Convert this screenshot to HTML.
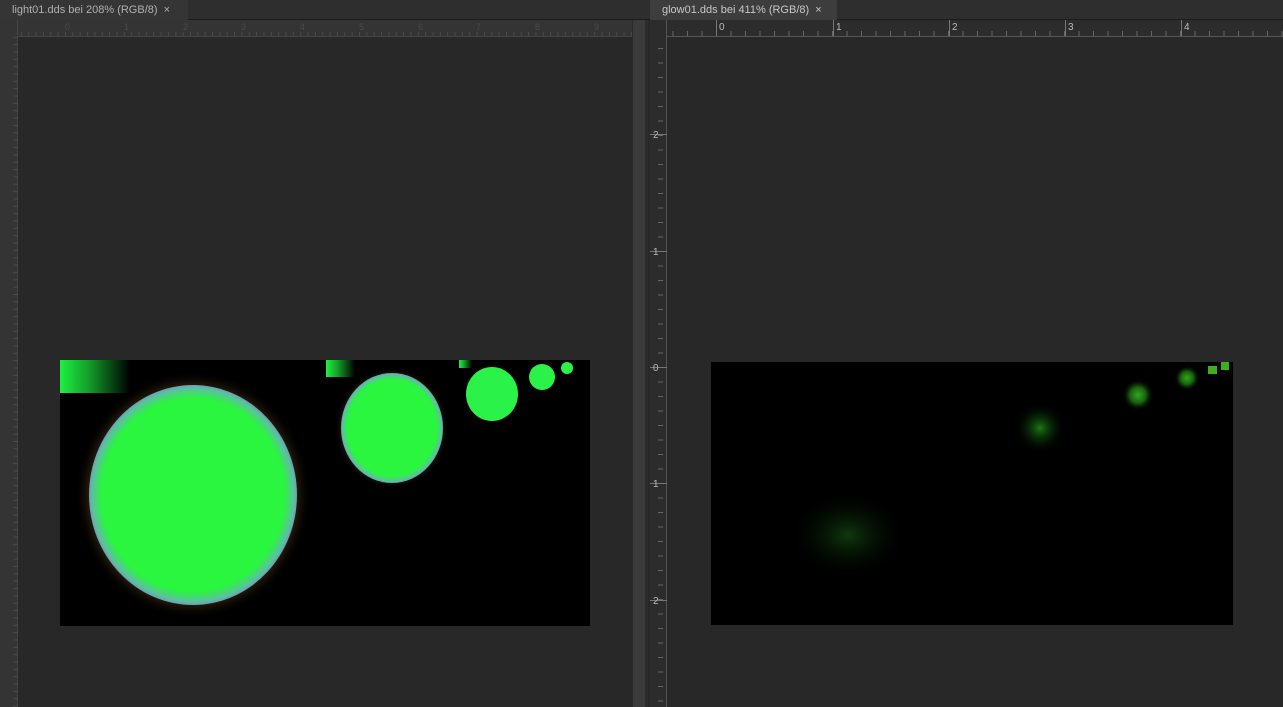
<!DOCTYPE html><html><head><style>
body{margin:0;width:1283px;height:707px;background:#282828;position:relative;overflow:hidden;font-family:"Liberation Sans",sans-serif}
div{position:absolute;box-sizing:border-box}
.tab{top:0;height:20px;background:#3d3d3d;color:#c8c8c8;font-size:11px;line-height:20px;padding-left:12px}
</style></head><body>
<div style="left:0;top:0;width:1283px;height:20px;background:#2e2e2e;border-bottom:1px solid #1c1c1c"></div>
<div class="tab" style="left:0;width:188px;background:#353535;color:#b0b0b0">light01.dds bei 208% (RGB/8) &nbsp;×</div>
<div class="tab" style="left:650px;width:187px">glow01.dds bei 411% (RGB/8) &nbsp;×</div>
<div style="left:0;top:20px;width:632px;height:17px;background:#343434;border-bottom:1px solid #444"></div>
<div style="left:0;top:20px;width:18px;height:687px;background:#343434;border-right:1px solid #444"></div>
<div style="left:18px;top:37px;width:614px;height:670px;background:#282828"></div>
<div style="left:632px;top:20px;width:16px;height:687px;background:#3b3b3b;border-left:1px solid #2a2a2a;border-right:3px solid #2c2c2c"></div>
<div style="left:650px;top:20px;width:633px;height:17px;background:#2c2c2c;border-bottom:1px solid #555"></div>
<div style="left:650px;top:20px;width:17px;height:687px;background:#2c2c2c;border-right:1px solid #555"></div>
<svg style="position:absolute;left:0;top:0" width="1283" height="707">
<defs>
<pattern id="th" x="716" y="0" width="14.5" height="37" patternUnits="userSpaceOnUse"><path d="M0.5 31V36" stroke="#666"/></pattern>
<pattern id="tv" x="0" y="367" width="17" height="14.5" patternUnits="userSpaceOnUse"><path d="M12 0.5H17" stroke="#666"/></pattern>
<pattern id="thl" x="65" y="0" width="7.35" height="37" patternUnits="userSpaceOnUse"><path d="M0.5 32V36" stroke="#4a4a4a"/></pattern>
<pattern id="tvl" x="0" y="0" width="18" height="7.35" patternUnits="userSpaceOnUse"><path d="M13 0.5H18" stroke="#4a4a4a"/></pattern>
<radialGradient id="big"><stop offset="0.88" stop-color="#2af53f"/><stop offset="0.97" stop-color="#5cc0a0"/><stop offset="1" stop-color="#6aa0b8"/></radialGradient>
<radialGradient id="halo"><stop offset="0.85" stop-color="#3a2a10"/><stop offset="1" stop-color="#000" stop-opacity="0"/></radialGradient>
<linearGradient id="lg"><stop offset="0" stop-color="#1ef040"/><stop offset="0.4" stop-color="#15a02a"/><stop offset="1" stop-color="#000"/></linearGradient>
<radialGradient id="g"><stop offset="0" stop-color="#1a7a14"/><stop offset="1" stop-color="#000" stop-opacity="0"/></radialGradient>
<radialGradient id="g2"><stop offset="0" stop-color="#30a81a"/><stop offset="0.5" stop-color="#1a6010"/><stop offset="1" stop-color="#000" stop-opacity="0"/></radialGradient>
<radialGradient id="gd"><stop offset="0" stop-color="#0f3a0c"/><stop offset="1" stop-color="#000" stop-opacity="0"/></radialGradient>
</defs>
<rect x="667" y="20" width="616" height="17" fill="url(#th)"/>
<rect x="650" y="37" width="17" height="670" fill="url(#tv)"/>
<rect x="18" y="20" width="614" height="17" fill="url(#thl)"/>
<rect x="0" y="37" width="18" height="670" fill="url(#tvl)"/>
<g stroke="#555"><path d="M667 36.5H1283M666.5 37V707"/></g>
<g stroke="#777"><path d="M716.5 20V36M833.5 20V36M949.5 20V36M1065.5 20V36M1181.5 20V36M650 367.5H667M650 251.5H667M650 134.5H667M650 483.5H667M650 600.5H667"/></g>
<g fill="#bbb" font-size="10" font-family="Liberation Sans">
<text x="719" y="30">0</text><text x="836" y="30">1</text><text x="952" y="30">2</text><text x="1068" y="30">3</text><text x="1184" y="30">4</text>
<text x="653" y="138">2</text><text x="653" y="255">1</text><text x="653" y="371">0</text><text x="653" y="487">1</text><text x="653" y="604">2</text>
</g>
<g fill="#4a4a4a" font-size="9" font-family="Liberation Sans">
<text x="65" y="30">0</text><text x="124" y="30">1</text><text x="183" y="30">2</text><text x="241" y="30">3</text><text x="300" y="30">4</text><text x="359" y="30">5</text><text x="418" y="30">6</text><text x="476" y="30">7</text><text x="535" y="30">8</text><text x="594" y="30">9</text>
</g>
<rect x="60" y="360" width="530" height="266" fill="#000"/>
<ellipse cx="193" cy="495" rx="118" ry="124" fill="url(#halo)"/>
<ellipse cx="193" cy="495" rx="104" ry="110" fill="url(#big)"/>
<ellipse cx="392" cy="428" rx="57" ry="61" fill="url(#halo)"/>
<ellipse cx="392" cy="428" rx="51" ry="55" fill="url(#big)"/>
<ellipse cx="492" cy="394" rx="26" ry="27" fill="#2af248"/>
<circle cx="542" cy="377" r="13" fill="#2af248"/>
<circle cx="567" cy="368" r="6" fill="#2af248"/>
<rect x="60" y="360" width="70" height="33" fill="url(#lg)"/>
<rect x="326" y="360" width="29" height="17" fill="url(#lg)"/>
<rect x="459" y="360" width="13" height="8" fill="url(#lg)"/>
<rect x="711" y="362" width="522" height="263" fill="#000"/>
<ellipse cx="848" cy="535" rx="60" ry="45" fill="url(#gd)"/>
<circle cx="1040" cy="428" r="26" fill="url(#g)"/>
<circle cx="1138" cy="395" r="16" fill="url(#g2)"/>
<circle cx="1187" cy="378" r="13" fill="url(#g2)"/>
<rect x="1208" y="366" width="9" height="8" fill="#3fae1a"/>
<rect x="1221" y="362" width="8" height="8" fill="#3fae1a"/>
</svg>
</body></html>
